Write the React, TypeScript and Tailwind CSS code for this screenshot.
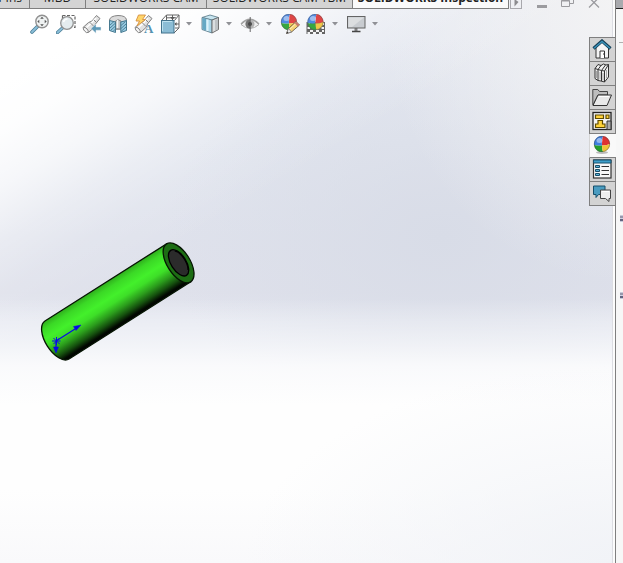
import React from "react";

interface IconProps {
  children: React.ReactNode;
}

const Icon: React.FC<IconProps> = ({ children }) => {
  return (
    <svg
      className="w-5 h-5 shrink-0"
      viewBox="0 0 20 20"
      fill="none"
      aria-hidden="true"
    >
      {children}
    </svg>
  );
};

const Ball: React.FC<{ cx: number; cy: number; r: number }> = ({
  cx,
  cy,
  r,
}) => {
  const k = r / 8;
  return (
    <g transform={`translate(${cx} ${cy}) scale(${k})`}>
      <path d="M1-8A8 8 0 0 0-8 1Q-4 2 0 1.500Q-.5-4 1-8Z" fill="#3f7fe0" />
      <path d="M1-8A8 8 0 0 1 8 0Q4 1.500 0 1.500Q-.5-4 1-8Z" fill="#dd3232" />
      <path d="M-8 1A8 8 0 0 0 1 8Q0 5 0 1.500Q-4 2-8 1Z" fill="#23a02b" />
      <path d="M8 0A8 8 0 0 1 1 8Q0 5 0 1.500Q4 1.500 8 0Z" fill="#f0c436" />
      <ellipse cx="-2.500" cy="-3.500" rx="3" ry="2.500" fill="#fff" opacity=".45" />
      <circle r="7.700" stroke="#444" strokeWidth=".7" opacity=".6" />
    </g>
  );
};

const ZoomFitIcon = () => (
  <Icon>
    <path d="M2 18l6-6" stroke="#3c748f" strokeWidth="3.600" strokeLinecap="round" />
    <path d="M2 18l5-5" stroke="#7fb9d6" strokeWidth="1.800" strokeLinecap="round" />
    <circle cx="12" cy="7.500" r="6.200" fill="#eef1f1" stroke="#868686" strokeWidth="1.400" />
    <path
      d="M12 2.800l1.800 2h-3.600zM12 12.200l1.800-2h-3.600zM7.300 7.500l2-1.800v3.600zM16.700 7.500l-2-1.800v3.600z"
      fill="#444"
    />
  </Icon>
);

const ZoomAreaIcon = () => (
  <Icon>
    <path d="M6.500 1.500h12.500v12h-2M6.500 1.500v3" stroke="#555" strokeWidth="1.200" strokeDasharray="3 1.500" />
    <path d="M1.500 18.500l5.500-5" stroke="#3c748f" strokeWidth="3.400" strokeLinecap="round" />
    <path d="M1.500 18.500l5-4.500" stroke="#7fb9d6" strokeWidth="1.700" strokeLinecap="round" />
    <circle cx="11" cy="9" r="6.300" fill="#e2ebee" stroke="#858585" strokeWidth="1.300" />
    <path d="M7.500 8a4 4 0 0 1 4-3" stroke="#fff" strokeWidth="1.500" />
  </Icon>
);

const Torch = () => (
  <>
    <path
      d="M14.500 1.500l3.500 3-4.500 5.500-1 3-6 5.500q-4-.500-5.500-5l5.500-5 3.500-1.500z"
      fill="#dedede"
      stroke="#747474"
    />
    <path d="M14 4l-4.500 5-5 4.500" stroke="#fff" strokeWidth="1.600" />
    <path d="M8 8.500l4 4M12 6l2.500 2.500" stroke="#777" />
    <ellipse cx="3.800" cy="16" rx="1.600" ry="3.300" transform="rotate(-42 3.800 16)" fill="#f4f4f4" stroke="#747474" strokeWidth=".9" />
  </>
);

const PreviousViewIcon = () => (
  <Icon>
    <Torch />
    <path d="M9 14.500l5-4.500v3h5v3.200h-5v3z" fill="#4d8fb0" stroke="#e8eef2" strokeWidth=".5" />
  </Icon>
);

const SectionViewIcon = () => (
  <Icon>
    <path d="M1.500 6Q2 2 10 1.500q8 0 8.500 4.500v2h-5.500v7h-6V8H1.500z" fill="#d8d8d8" stroke="#777" />
    <path d="M7.500 7q2.500-2.500 5.500 0v8H7.500z" fill="#b9bcbd" stroke="#666" strokeWidth=".8" />
    <path d="M9.500 6v8" stroke="#f4f4f4" strokeWidth="1.500" />
    <path d="M1.500 6.500l6 1.500v10.500l-6-2zM12.800 8l5.700-1.500v10l-5.700 2z" fill="#8ec6df" stroke="#326b85" />
    <path
      d="M2 11l4-3.500M2 14l5-4.500M2.500 16.500l5-4.500M5 17.500l2.500-2.500M13 11.500l4.500-4M13 14.500l5-4.500M13 17.500l5-4.500"
      stroke="#326b85"
      strokeWidth=".9"
    />
  </Icon>
);

const AnnotationViewIcon = () => (
  <Icon>
    <Torch />
    <path d="M4.500 1h7L8.500 5.500h3L3 12l2.500-5H2z" fill="#ffd15a" stroke="#d2842c" strokeWidth=".9" />
    <text x="10" y="19" fontSize="13" fontWeight="bold" fontFamily="Liberation Serif, serif" fill="#4286a8">
      A
    </text>
  </Icon>
);

const OrientationIcon = () => (
  <Icon>
    <path d="M1.500 6.500l5-5.500H19v13l-5 5M6.500 1v5M14.500 6.500L19 1M12.500 1v5M15 10h4M15 14h4M6 3.800h10" stroke="#555" />
    <path d="M10.200 3l2.300 3 2.300-3z" fill="#444" />
    <path d="M16.500 8l-2 2 2 2z" fill="#444" />
    <rect x="1.500" y="6.500" width="12.500" height="12.500" fill="#7fb6d1" stroke="#2f6480" />
    <path d="M2.500 17V7.500H12" stroke="#b8dfee" />
  </Icon>
);

const DisplayStyleIcon = () => (
  <Icon>
    <path d="M2 3.500L10 1l8.500 2.500L12 6z" fill="#c2e3ef" stroke="#547584" strokeWidth=".9" />
    <path d="M2 3.500L12 6v13L2 15.500z" fill="#a1d3e8" stroke="#547584" strokeWidth=".9" />
    <path d="M2.500 4L6 5v11.500l-3.500-1.200z" fill="#559fbe" />
    <path d="M7.500 5.500v11.500" stroke="#d9f2fb" strokeWidth="2" />
    <path d="M12 6l6.500-2.500v12L12 19z" fill="#d8dcde" stroke="#555" strokeWidth=".9" />
    <path d="M15 6v11l3-1.500V5z" fill="#a3a7aa" opacity=".6" />
  </Icon>
);

const EyeIcon = () => (
  <Icon>
    <path d="M1 10.500Q10 1 19 10.500 10 18.500 1 10.500z" fill="#f0f0f0" stroke="#aaa" />
    <path d="M1 10Q10 .5 19 10" stroke="#999" strokeWidth="1.300" />
    <circle cx="10" cy="10" r="4.500" fill="#aaa" />
    <path d="M10 5.500a4.500 4.500 0 0 0 0 9z" fill="#666" />
    <circle cx="10" cy="10" r="2" fill="#333" />
    <path d="M10.200 3v15" stroke="#444" strokeWidth=".9" />
  </Icon>
);

const AppearanceIcon = () => (
  <Icon>
    <Ball cx={9} cy={8} r={8} />
    <path d="M6.500 19.500l2-5L16 7.500l3.500 3.500-8 7z" fill="#f6cf68" stroke="#5a4a38" strokeWidth=".9" />
    <path d="M9.500 15.500l7-6.500" stroke="#fff1b5" />
    <path d="M6.500 19.500l2-5 3 3.500z" fill="#eee" stroke="#555" strokeWidth=".6" />
    <path d="M6.500 19.500l.8-2 1.300 1.200z" fill="#222" />
    <path d="M14.500 9l1.500-1.500 3.500 3.500-1.800 1.500z" fill="#c06f60" />
  </Icon>
);

const SceneIcon = () => (
  <Icon>
    <path d="M.5 8h18.500v12H.500z" fill="#555" />
    <path
      d="M2 9h2v2H2zM16 9h2v2h-2zM1.500 13h2.500v2H1.500zM15.500 13H18v2h-2.500zM4 16h3v2H4zM10 16h3v2h-3zM1.500 18H4v2H1.500zM7 18h3v2H7zM13 18h3v2h-3zM16 16h2v2h-2z"
      fill="#f4f4f4"
    />
    <Ball cx={9.5} cy={8} r={8} />
  </Icon>
);

const MonitorIcon = () => (
  <Icon>
    <path d="M8.500 14h3v3h-3z" fill="#777" />
    <rect x="1.500" y="2.500" width="17.500" height="11.500" fill="#c4c8cc" stroke="#555" />
    <path d="M2.500 3.500h15.500L6 13H2.500z" fill="#dadcde" />
    <path d="M6 17.500h8.500" stroke="#333" strokeWidth="1.500" />
  </Icon>
);

const HomeIcon = () => (
  <Icon>
    <path d="M4 8.500l6-6 6.500 6V19H4z" fill="#f5f5f5" stroke="#333" />
    <path d="M8 19v-7h4.500v7" fill="#fff" stroke="#333" />
    <path d="M11 15h1" stroke="#333" />
    <path d="M1.500 9.500L10 2l8.500 7.500" stroke="#163f56" strokeWidth="3.200" />
    <path d="M2 9.200L10 2.500l8 6.700" stroke="#3a93ba" strokeWidth="1.400" />
  </Icon>
);

const LibraryIcon = () => (
  <Icon>
    <path
      d="M3 5.500L6 1.500 9 2.500 11.500 1l2.500 1 2.500-.5V14l-4 5-3.500-1-3-.5-3-2z"
      fill="#f1f1f1"
      stroke="#333"
    />
    <path d="M3 5.500l3 1L9 2.500M6 6.500v11M6 6.500l3.500 1L13.500 2M9.500 7.500V18M9.500 7.500l3 .5 4-6.500M12.500 8v11" stroke="#333" />
    <path d="M4.500 8v7M8 9v7.500M11 10v7.500M14.500 7v8" stroke="#aaa" />
  </Icon>
);

const FolderIcon = () => (
  <Icon>
    <path d="M.8 17.500v-15h5L7.500 4.500h8V8H6L1 18z" fill="#bdbdbd" stroke="#444" />
    <path d="M6 8h13.500L15 18.500H1z" fill="#e9e9e9" stroke="#333" />
    <path d="M7 9.500h10" stroke="#fff" />
  </Icon>
);

const PaletteIcon = () => (
  <Icon>
    <rect x="1" y="1.500" width="18" height="17" fill="#f4f4f4" stroke="#222" strokeWidth="1.300" />
    <path
      d="M3.500 4h8v3.500h-8zM14 4h3v3.500h-3zM6 9.500h4.500v3.500H13v3.500H3.500V13H6z"
      fill="#ffd33a"
      stroke="#5e4b00"
      strokeWidth="1.200"
    />
    <path d="M15 18.500V10H19v8.500z" fill="#aaa" stroke="#333" />
  </Icon>
);

const PropertiesIcon = () => (
  <Icon>
    <rect x="1.500" y="1" width="17.500" height="18" fill="#f7f7f7" stroke="#333" strokeWidth="1.200" />
    <path d="M1.500 1H19v3H1.500z" fill="#3f9fca" stroke="#18506c" />
    <path d="M3.500 6.500h4v2h-4zM3.500 10.500h4v2h-4zM3.500 14.500h4v2h-4z" fill="#5eb3d8" stroke="#164e69" />
    <path d="M9.500 7.500H17M9.500 11.500H17M9.500 15.500H17" stroke="#333" />
  </Icon>
);

const ForumIcon = () => (
  <Icon>
    <path d="M1.500 3H13v8.500H6.500L4 14.500v-3H1.500z" fill="#4a9cc0" stroke="#164e69" />
    <path d="M8.500 7h10v8.500h-1.500v3l-3.500-3h-5z" fill="#eee" stroke="#444" />
    <path d="M10 8.500h7" stroke="#fff" />
  </Icon>
);

interface Tool {
  label: string;
  icon: React.ReactNode;
}

const toolGroups: Tool[][] = [
  [
    { label: "Zoom to Fit", icon: <ZoomFitIcon /> },
    { label: "Zoom to Area", icon: <ZoomAreaIcon /> },
    { label: "Previous View", icon: <PreviousViewIcon /> },
    { label: "Section View", icon: <SectionViewIcon /> },
    { label: "Dynamic Annotation Views", icon: <AnnotationViewIcon /> },
    { label: "View Orientation", icon: <OrientationIcon /> },
  ],
  [{ label: "Display Style", icon: <DisplayStyleIcon /> }],
  [{ label: "Hide/Show Items", icon: <EyeIcon /> }],
  [
    { label: "Edit Appearance", icon: <AppearanceIcon /> },
    { label: "Apply Scene", icon: <SceneIcon /> },
  ],
  [{ label: "View Settings", icon: <MonitorIcon /> }],
];

const panes = [
  { label: "SOLIDWORKS Resources", icon: <HomeIcon /> },
  { label: "Design Library", icon: <LibraryIcon /> },
  { label: "File Explorer", icon: <FolderIcon /> },
  { label: "View Palette", icon: <PaletteIcon /> },
  {
    label: "Appearances",
    icon: (
      <Icon>
        <ellipse cx="10" cy="17.500" rx="6" ry="1.500" fill="#bbb" />
        <Ball cx={10} cy={9} r={8} />
      </Icon>
    ),
    active: true,
  },
  { label: "Custom Properties", icon: <PropertiesIcon /> },
  { label: "Forum", icon: <ForumIcon /> },
];

const tabs = [
  { label: "Add-Ins", className: "w-[30px] justify-end pr-[7px]" },
  { label: "MBD", className: "w-14 justify-center" },
  { label: "SOLIDWORKS CAM", className: "w-[121px] justify-center" },
  { label: "SOLIDWORKS CAM TBM", className: "w-[146px] justify-center" },
];

const TabStrip = () => {
  return (
    <div className="flex h-[9px] items-end overflow-hidden text-xs leading-4 text-[#222]">
      {tabs.map((tab) => (
        <button
          key={tab.label}
          className={`flex shrink-0 h-6 items-end whitespace-nowrap border-r border-b border-[#7f7f7f] bg-[#d4d4d4] pb-0.5 ${tab.className}`}
        >
          {tab.label}
        </button>
      ))}
      <button className="flex shrink-0 h-6 w-[156px] items-end justify-center whitespace-nowrap border-r border-b border-[#7f7f7f] bg-[#fafafa] pb-0.5 font-bold">
        SOLIDWORKS Inspection
      </button>
      <button
        aria-label="Scroll tabs right"
        className="ml-px flex h-6 w-3 shrink-0 items-end justify-center border border-[#a8a8ad] pb-px"
      >
        <svg className="w-[6px] h-[8px]" viewBox="0 0 6 8" aria-hidden="true">
          <path d="M1.500 0v7.500L5.500 3z" fill="#8b8b8f" />
        </svg>
      </button>
      <div className="ml-auto mr-2 flex shrink-0">
        <button aria-label="Minimize" className="flex w-[26px] justify-center">
          <svg className="w-4 h-[9px]" viewBox="0 0 16 9" aria-hidden="true">
            <path d="M3 5h10v3H3z" fill="#9b9b9f" />
          </svg>
        </button>
        <button aria-label="Restore" className="flex w-[26px] justify-center">
          <svg className="w-4 h-[9px]" viewBox="0 0 16 9" fill="none" aria-hidden="true">
            <path d="M1.500 .5h8v6h-8zM1.500 1h8M5.500 0v-3M13.500-2v5.500h-4" stroke="#9b9b9f" />
          </svg>
        </button>
        <button aria-label="Close" className="flex w-[26px] justify-center">
          <svg className="w-4 h-[9px]" viewBox="0 0 16 9" fill="none" aria-hidden="true">
            <path d="M3 7.500L12.500-2M3.500-2L13 7.500" stroke="#9b9b9f" strokeWidth="1.300" />
          </svg>
        </button>
      </div>
    </div>
  );
};

const ViewToolbar = () => {
  return (
    <div className="flex items-start gap-[2px] pl-[27px] pt-[5px] opacity-90">
      {toolGroups.map((group, index) => (
        <div key={index} className="flex items-center">
          {group.map((tool) => (
            <button
              key={tool.label}
              aria-label={tool.label}
              className="flex h-5 w-[26px] items-center justify-center"
            >
              {tool.icon}
            </button>
          ))}
          <button
            aria-label={`${group[group.length - 1].label} options`}
            className="flex h-5 w-3 items-center justify-center"
          >
            <svg className="w-[6px] h-[4px]" viewBox="0 0 6 4" aria-hidden="true">
              <path d="M0 0h6L3 3.500z" fill="#85868b" />
            </svg>
          </button>
        </div>
      ))}
    </div>
  );
};

const TaskPane = () => {
  return (
    <nav
      aria-label="Task pane"
      className="-mr-px mt-7 flex w-[27px] shrink-0 flex-col self-start border-t border-[#7f7f7f]"
    >
      {panes.map((pane) => (
        <button
          key={pane.label}
          aria-label={pane.label}
          className={`flex h-6 items-center justify-start border-b border-l pl-[2px] pb-px ${
            pane.active
              ? "border-l-[#d5d5d5] border-b-[#7f7f7f] bg-[#f9f9f9]"
              : "border-r border-[#7f7f7f] bg-[#d3d3d3]"
          }`}
        >
          {pane.icon}
        </button>
      ))}
    </nav>
  );
};

const TubeModel = () => {
  return (
    <svg
      className="absolute left-[38px] top-[238px] w-[160px] h-[126px]"
      viewBox="38 238 160 126"
      fill="none"
      role="img"
      aria-label="Green tube"
    >
      <defs>
        <linearGradient id="tube" x1="0" y1="-22.500" x2="0" y2="22.500" gradientUnits="userSpaceOnUse">
          <stop offset="0" stopColor="#2fae1d" />
          <stop offset=".14" stopColor="#3bd926" />
          <stop offset=".34" stopColor="#43f02b" />
          <stop offset=".48" stopColor="#3edf28" />
          <stop offset=".66" stopColor="#2b9c1c" />
          <stop offset=".82" stopColor="#15500e" />
          <stop offset=".94" stopColor="#020a01" />
          <stop offset="1" stopColor="#000" />
        </linearGradient>
      </defs>
      <g transform="translate(57 340) rotate(-32.400)">
        <path
          d="M0-22.500A11.400 22.500 0 0 0 0 22.500H144V-22.500Z"
          fill="url(#tube)"
          stroke="#061503"
          strokeWidth="1.300"
        />
        <ellipse cx="144" rx="11.400" ry="22.500" fill="#1d6d14" stroke="#061503" strokeWidth="1.300" />
        <ellipse cx="144" rx="7.500" ry="14.800" fill="#2b2b2b" stroke="#000" strokeWidth="1.300" />
        <path d="M147-12A6 13 0 0 1 148 11" stroke="#000" />
      </g>
      <g stroke="#0909e8" strokeWidth="1.200">
        <path d="M56 341L75 329M56 341v6" />
        <path d="M52 341h8.500M56.500 337v8M53.500 338l6 6M59.500 338l-6 6" strokeWidth="1" />
        <path d="M81 325l-7.500 1.500 2.500 4zM56 353l-2.500-6h5z" fill="#0909e8" strokeWidth=".5" />
      </g>
    </svg>
  );
};

const SplitterGrip = () => {
  return (
    <div className="ml-auto flex h-[7px] w-[3px] flex-col">
      <span className="h-px bg-[#c8cada]" />
      <span className="h-[2px] bg-[#9798ac]" />
      <span className="h-px bg-[#d0d2e4]" />
      <span className="h-[2px] bg-[#62647f]" />
      <span className="h-px bg-[#c8cada]" />
    </div>
  );
};

// front to back: floor fade, corner lights, horizon shade, sky
const viewportBackground =
  "bg-[radial-gradient(ellipse_60%_35%_at_100%_100%,#f1f3f7_0%,#f1f3f700_100%),linear-gradient(to_bottom,#ffffff00_53%,#ffffff40_57%,#ffffff80_61%,#ffffffcc_65%,#fefefe_72%,#fefefe_87%,#f9f9fb_100%),linear-gradient(149deg,#fff_9%,#fffffff0_14%,#ffffffb3_20%,#ffffff55_26%,#ffffff1f_31%,#ffffff00_38%),radial-gradient(ellipse_38%_50%_at_100%_0%,#f3f3f4_0%,#f3f3f400_100%),radial-gradient(ellipse_45%_35%_at_72%_42%,#d8dce7_0%,#d8dce700_100%),linear-gradient(to_bottom,#e6e9f1_0%,#e2e6ef_25%,#dfe2ec_42%,#dfe1eb_52%,#e4e7f0_57%,#e8eaf2_100%)]";

export default function App() {
  return (
    <div className="flex min-h-screen bg-[#f7f7f7] font-['Open_Sans','Noto_Sans',sans-serif]">
      <main
        className={`relative flex min-w-0 flex-1 flex-col border-r border-[#7f7f7f] shadow-[inset_-2px_0_#fcfcfc,inset_-3px_0_#dcdde2] ${viewportBackground}`}
      >
        <TabStrip />
        <div className="flex flex-1 justify-between">
          <ViewToolbar />
          <TaskPane />
        </div>
        <TubeModel />
      </main>
      <aside className="flex w-[7px] shrink-0 flex-col">
        <div className="h-[9px] border-b border-[#222] bg-[#a9aaae]" />
        <div className="ml-[3px] h-[34px] border-b border-[#b0b0b0]" />
        <div className="flex flex-col gap-[70px] pt-[172px]">
          <SplitterGrip />
          <SplitterGrip />
        </div>
      </aside>
    </div>
  );
}
